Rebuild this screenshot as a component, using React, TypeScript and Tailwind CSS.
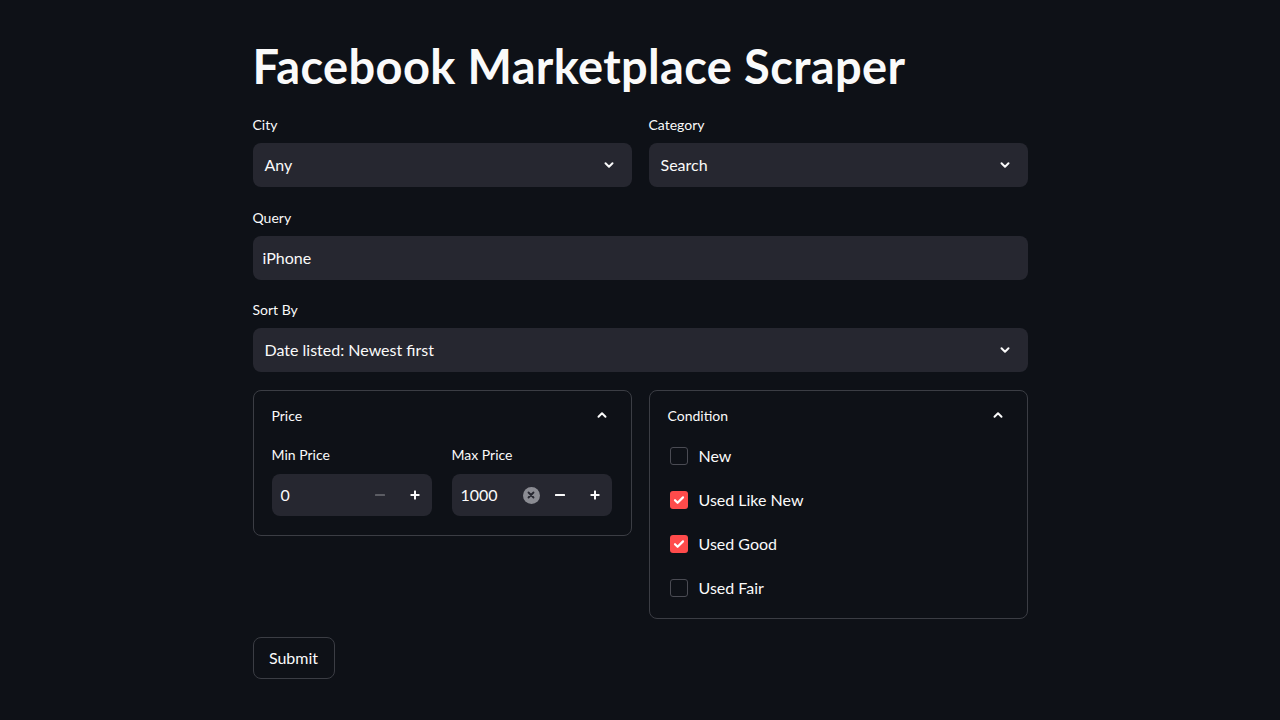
import React from "react";

const font = { fontFamily: "Lato, 'Open Sans', sans-serif" };

function ChevronDown() {
  return (
    <svg width="14" height="14" viewBox="0 0 24 24" fill="none" stroke="#fafafa" strokeWidth="3.4" strokeLinecap="round" strokeLinejoin="round">
      <path d="M6 9l6 6 6-6" />
    </svg>
  );
}

function ChevronUp() {
  return (
    <svg width="14" height="14" viewBox="0 0 24 24" fill="none" stroke="#fafafa" strokeWidth="3.4" strokeLinecap="round" strokeLinejoin="round">
      <path d="M6 15l6-6 6 6" />
    </svg>
  );
}

function Label({ children }: { children: React.ReactNode }) {
  return <div className="h-5 text-[14px] leading-5 text-[#fafafa]">{children}</div>;
}

function Select({ value }: { value: string }) {
  return (
    <div className="mt-2 flex h-[44px] items-center justify-between rounded-lg bg-[#262730] pl-3 pr-4 text-[16px] text-[#fafafa]">
      <span>{value}</span>
      <ChevronDown />
    </div>
  );
}

function Minus({ dim }: { dim?: boolean }) {
  return (
    <svg width="12" height="12" viewBox="0 0 12 12">
      <rect x="1" y="5" width="10" height="2" rx="0.5" fill={dim ? "#5b5c63" : "#fafafa"} />
    </svg>
  );
}

function Plus() {
  return (
    <svg width="12" height="12" viewBox="0 0 12 12" fill="#fafafa">
      <rect x="1.5" y="5" width="9" height="2" rx="0.5" />
      <rect x="5" y="1.5" width="2" height="9" rx="0.5" />
    </svg>
  );
}

function NumberInput({ value, clear, dimMinus }: { value: string; clear?: boolean; dimMinus?: boolean }) {
  return (
    <div className="mt-[9px] flex h-[42px] items-center rounded-lg bg-[#262730] text-[16px] text-[#fafafa]">
      <span className="flex-1 pl-[9px]">{value}</span>
      {clear && (
        <span className="mr-[2px] flex h-[17px] w-[17px] items-center justify-center rounded-full bg-[#8b8c93]">
          <svg width="8" height="8" viewBox="0 0 8 8" stroke="#262730" strokeWidth="1.8" strokeLinecap="round">
            <path d="M1.5 1.5l5 5M6.5 1.5l-5 5" />
          </svg>
        </span>
      )}
      <span className="flex w-[36px] items-center justify-center">
        <Minus dim={dimMinus} />
      </span>
      <span className="flex w-[34px] items-center justify-center">
        <Plus />
      </span>
    </div>
  );
}

function Checkbox({ label, checked }: { label: string; checked?: boolean }) {
  return (
    <div className="flex h-[44px] items-center">
      {checked ? (
        <span className="ml-[2px] flex h-[18px] w-[18px] items-center justify-center rounded-[3px] bg-[#ff4b4b]">
          <svg width="12" height="12" viewBox="0 0 12 12" fill="none" stroke="#fff" strokeWidth="2.2" strokeLinecap="round" strokeLinejoin="round">
            <path d="M2 6.2l2.6 2.6L10 3.4" />
          </svg>
        </span>
      ) : (
        <span className="ml-[2px] h-[18px] w-[18px] rounded-[3px] border border-[#4a4b53] bg-[#0e1117]" />
      )}
      <span className="ml-[11px] text-[16px] text-[#fafafa]">{label}</span>
    </div>
  );
}

export default function App() {
  return (
    <div style={font} className="min-h-screen bg-[#0e1117] text-[#fafafa]">
      <div className="mx-auto w-[775px] pt-[40px]">
        <h1 className="h-[53px] text-[47px] font-bold leading-[53px] tracking-[0.35px]">
          Facebook Marketplace Scraper
        </h1>

        <div className="mt-[22px] grid grid-cols-2 gap-[17px]">
          <div>
            <Label>City</Label>
            <Select value="Any" />
          </div>
          <div>
            <Label>Category</Label>
            <Select value="Search" />
          </div>
        </div>

        <div className="mt-[21px]">
          <Label>Query</Label>
          <div className="mt-2 flex h-[44px] items-center rounded-lg bg-[#262730] pl-[10px] text-[16px]">iPhone</div>
        </div>

        <div className="mt-[20px]">
          <Label>Sort By</Label>
          <Select value="Date listed: Newest first" />
        </div>

        <div className="mt-[18px] grid grid-cols-2 items-start gap-[17px]">
          <div className="rounded-lg border border-[#3b3d44]">
            <div className="flex h-[48px] items-center justify-between pl-[18px] pr-[22px] text-[14px]">
              <span>Price</span>
              <ChevronUp />
            </div>
            <div className="mt-[6px] grid grid-cols-2 gap-[20px] pb-[19px] pl-[18px] pr-[19px]">
              <div>
                <Label>Min Price</Label>
                <NumberInput value="0" dimMinus />
              </div>
              <div>
                <Label>Max Price</Label>
                <NumberInput value="1000" clear />
              </div>
            </div>
          </div>

          <div className="rounded-lg border border-[#3b3d44]">
            <div className="flex h-[48px] items-center justify-between pl-[18px] pr-[22px] text-[14px]">
              <span>Condition</span>
              <ChevronUp />
            </div>
            <div className="pb-[8px] pl-[18px]">
              <div className="-mt-[5px]">
                <Checkbox label="New" />
                <Checkbox label="Used Like New" checked />
                <Checkbox label="Used Good" checked />
                <Checkbox label="Used Fair" />
              </div>
            </div>
          </div>
        </div>

        <button className="mt-[18px] flex h-[42px] w-[82px] items-center justify-center rounded-lg border border-[#3b3d44] bg-[#0e1117] text-[16px] text-[#fafafa]">
          Submit
        </button>
      </div>
    </div>
  );
}
